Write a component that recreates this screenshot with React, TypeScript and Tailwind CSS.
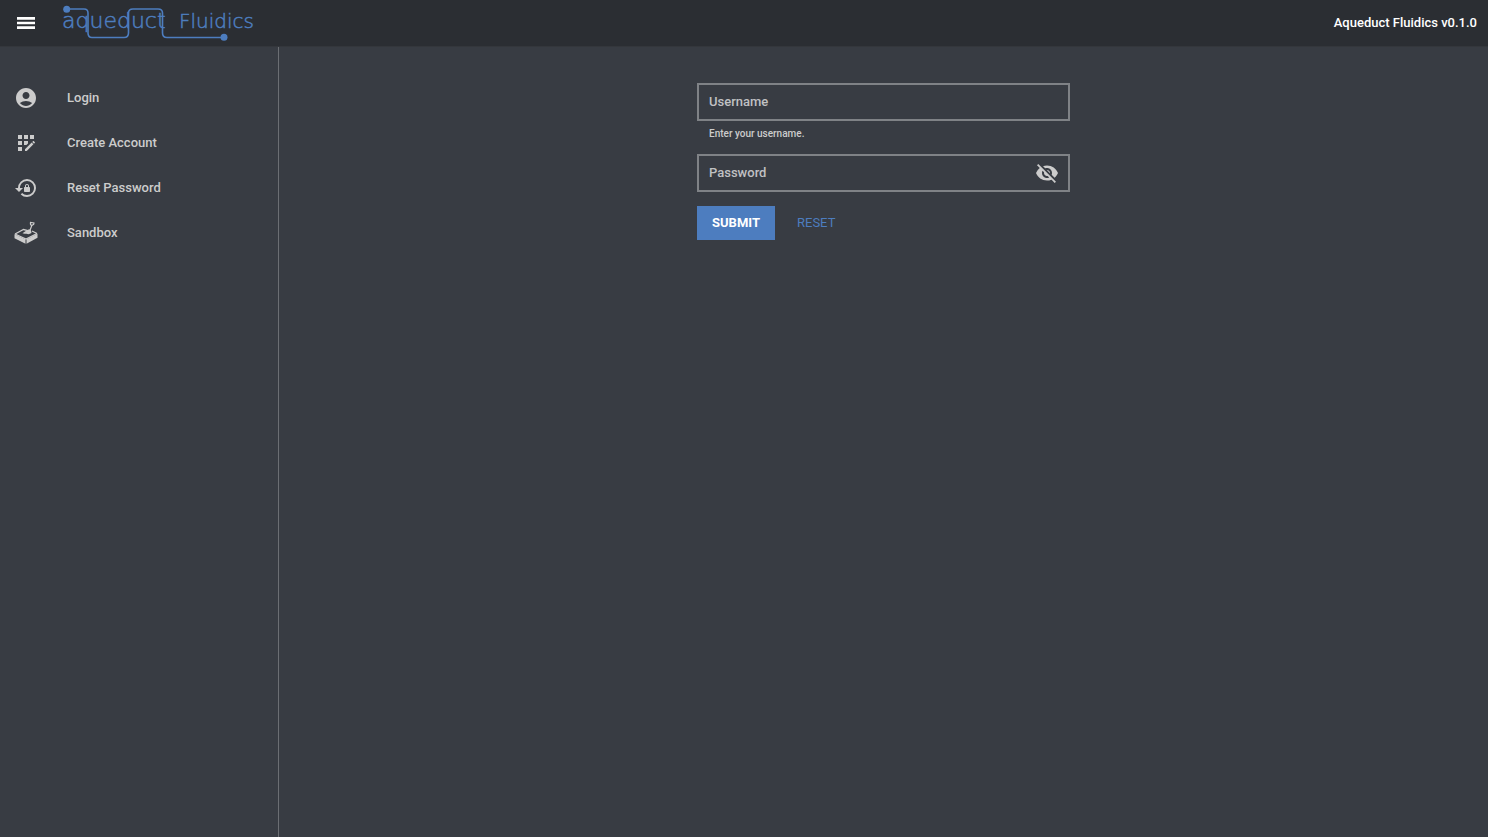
import { useState, type ReactNode } from "react";
import {
  MdAccountCircle,
  MdAppRegistration,
  MdLockReset,
  MdVisibility,
  MdVisibilityOff,
} from "react-icons/md";

function Logo() {
  return (
    <svg width="196" height="38" viewBox="62 4 196 38" fill="none" role="img" aria-label="Aqueduct Fluidics">
      <g stroke="#4d7dbf" strokeWidth="1.6">
        <path d="M67 9H84Q88 9 88 13V33Q88 37.500 92 37.500H124Q128.500 37.500 128.500 33V13Q128.500 9 133 9H158Q162.500 9 162.500 13V33Q162.500 37.500 167 37.500H224" />
      </g>
      <circle cx="66.700" cy="9.200" r="3.500" fill="#4d7dbf" />
      <circle cx="224" cy="37.300" r="3.500" fill="#4d7dbf" />
      <g fill="#4d7dbf" stroke="#4d7dbf" strokeWidth="0.5" className="font-['DejaVu_Sans',sans-serif] font-extralight">
        <text x="62" y="28" className="text-[22px]">
          aqueduct
        </text>
        <text x="179" y="28" className="text-[20px]">
          Fluidics
        </text>
      </g>
    </svg>
  );
}

function MenuIcon() {
  return (
    <svg width="24" height="24" viewBox="0 0 24 24" fill="currentColor" aria-hidden="true">
      <path d="M3 6h18v2.700H3zM3 10.700h18v2.600H3zM3 15.300h18v2.700H3z" />
    </svg>
  );
}

function SandboxIcon() {
  return (
    <svg width="24" height="24" viewBox="0 0 24 24" fill="currentColor" aria-hidden="true">
      {/* box walls */}
      <path d="M.5 13.300 11.500 18.300V22.800L.5 17.300Z" />
      <path d="M12.500 18.300 23.500 12.800V16.800L12.500 22.800Z" />
      {/* rim */}
      <path d="M1 13 9.500 8.500 13 9.400M23 12.500 18 10M1 13 12 18 23 12.500" fill="none" stroke="currentColor" strokeWidth="1.300" />
      {/* sand */}
      <path d="M8.500 12.300Q10 11.300 11 10.500Q13 8.500 15.500 8.200Q17.500 9 17.500 12Q15 13.800 12.500 12.800Q10.500 12.800 8.500 12.300Z" />
      {/* shovel */}
      <path d="M15.500 10.500 18 4M16.500 1.500Q16 4.500 18.200 4.200Q20.200 3.500 20 2Z" fill="none" stroke="currentColor" strokeWidth="1.200" />
    </svg>
  );
}

const NAV: { label: string; icon: ReactNode }[] = [
  { label: "Login", icon: <MdAccountCircle size={24} /> },
  { label: "Create Account", icon: <MdAppRegistration size={24} /> },
  { label: "Reset Password", icon: <MdLockReset size={24} /> },
  { label: "Sandbox", icon: <SandboxIcon /> },
];

function Field({
  id,
  label,
  type = "text",
  children,
}: {
  id: string;
  label: string;
  type?: string;
  children?: ReactNode;
}) {
  const [value, setValue] = useState("");
  return (
    <div className="relative flex h-[38px] items-center border-2 border-[#7f8286] pr-[9px]">
      <input
        id={id}
        type={type}
        value={value}
        onChange={(e) => setValue(e.target.value)}
        className="h-full min-w-0 flex-1 bg-transparent px-[10px] text-[13px] text-[#d0d0d0] outline-none"
      />
      {value === "" && (
        <label
          htmlFor={id}
          className="pointer-events-none absolute inset-y-0 left-[10px] flex items-center text-[13px] font-medium text-[#c0c1c3]"
        >
          {label}
        </label>
      )}
      {children}
    </div>
  );
}

export default function App() {
  const [menuOpen, setMenuOpen] = useState(true);
  const [showPassword, setShowPassword] = useState(false);

  return (
    <div className="flex min-h-screen flex-col bg-[#383c43] font-[Roboto,sans-serif] text-[13px] text-[#cccccc]">
      <header className="flex h-[47px] items-center justify-between border-b border-[#34373c] bg-[#2b2e33] pr-[11px] pl-[14px]">
        <div className="flex items-center gap-6">
          <button type="button" aria-label="Menu" onClick={() => setMenuOpen(!menuOpen)} className="text-white">
            <MenuIcon />
          </button>
          <a href="#home">
            <Logo />
          </a>
        </div>
        <span className="font-medium text-white">Aqueduct Fluidics v0.1.0</span>
      </header>

      <div className="flex flex-1">
        {menuOpen && (
          <nav className="w-[279px] shrink-0 border-r border-[#6b6e73] pt-7">
            {NAV.map((item) => (
              <a key={item.label} href="#" className="flex h-[45px] items-center gap-[29px] pl-[14px] font-medium">
                {item.icon}
                <span>{item.label}</span>
              </a>
            ))}
          </nav>
        )}

        <main className="flex flex-1 justify-center px-4 pt-9">
          <form className="w-full max-w-[373px]" onSubmit={(e) => e.preventDefault()}>
            <Field id="username" label="Username" />
            <p className="mt-1 mb-3 pl-3 text-[10px] leading-[17px] font-medium">Enter your username.</p>
            <Field id="password" label="Password" type={showPassword ? "text" : "password"}>
              <button
                type="button"
                aria-label="Toggle password visibility"
                onClick={() => setShowPassword(!showPassword)}
              >
                {showPassword ? <MdVisibility size={24} /> : <MdVisibilityOff size={24} />}
              </button>
            </Field>
            <div className="mt-[14px] flex gap-2">
              <button type="submit" className="h-[34px] w-[78px] bg-[#4d7dbf] font-bold text-white">
                SUBMIT
              </button>
              <button type="reset" className="h-[34px] px-[14px] text-[#4d7dbf]">
                RESET
              </button>
            </div>
          </form>
        </main>
      </div>
    </div>
  );
}
